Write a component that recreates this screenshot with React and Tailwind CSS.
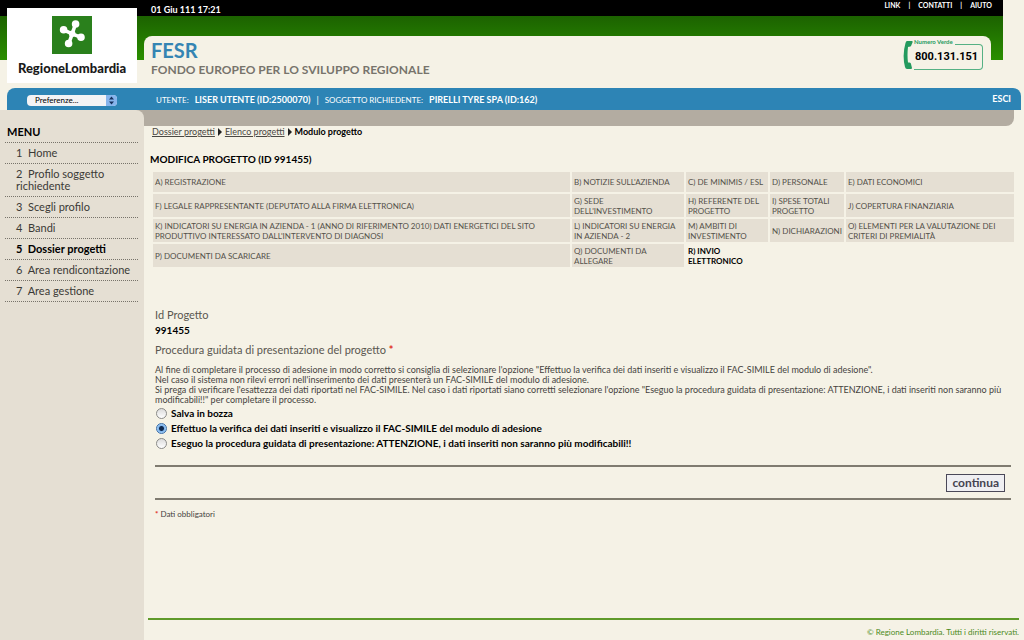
import React, { useState } from 'react';

const MENU_ITEMS = [
  'Home',
  'Profilo soggetto richiedente',
  'Scegli profilo',
  'Bandi',
  'Dossier progetti',
  'Area rendicontazione',
  'Area gestione',
];

const STEPS = [
  ['A) REGISTRAZIONE', "B) NOTIZIE SULL'AZIENDA", 'C) DE MINIMIS / ESL', 'D) PERSONALE', 'E) DATI ECONOMICI'],
  [
    'F) LEGALE RAPPRESENTANTE (DEPUTATO ALLA FIRMA ELETTRONICA)',
    "G) SEDE DELL'INVESTIMENTO",
    'H) REFERENTE DEL PROGETTO',
    'I) SPESE TOTALI PROGETTO',
    'J) COPERTURA FINANZIARIA',
  ],
  [
    "K) INDICATORI SU ENERGIA IN AZIENDA - 1 (ANNO DI RIFERIMENTO 2010) DATI ENERGETICI DEL SITO PRODUTTIVO INTERESSATO DALL'INTERVENTO DI DIAGNOSI",
    'L) INDICATORI SU ENERGIA IN AZIENDA - 2',
    'M) AMBITI DI INVESTIMENTO',
    'N) DICHIARAZIONI',
    'O) ELEMENTI PER LA VALUTAZIONE DEI CRITERI DI PREMIALITÀ',
  ],
  ['P) DOCUMENTI DA SCARICARE', 'Q) DOCUMENTI DA ALLEGARE', 'R) INVIO ELETTRONICO'],
];

const CURRENT_STEP = 'R) INVIO ELETTRONICO';

const OPTIONS = [
  { id: 'bozza', label: 'Salva in bozza' },
  { id: 'verifica', label: 'Effettuo la verifica dei dati inseriti e visualizzo il FAC-SIMILE del modulo di adesione' },
  {
    id: 'presentazione',
    label: 'Eseguo la procedura guidata di presentazione: ATTENZIONE, i dati inseriti non saranno più modificabili!!',
  },
];

function Logo() {
  return (
    <a href="#" className="mt-2 mr-[7px] ml-[7px] flex h-[75px] flex-col items-center bg-white pt-2">
      <svg viewBox="0 0 40 38" className="h-[38px] w-10">
        <rect width="40" height="38" fill="#2a801c" />
        <g stroke="#fff" strokeWidth="3.6" strokeLinecap="round" fill="#fff">
          <path d="M20.200 17.800 L23.500 8 M20.200 17.800 L29 21.300 M20.200 17.800 L16.800 27.500 M20.200 17.800 L11.500 13.800" />
          <circle cx="23.6" cy="8" r="2" />
          <circle cx="29" cy="21.3" r="2" />
          <circle cx="16.6" cy="27.5" r="2" />
          <circle cx="11.6" cy="13.8" r="2" />
          <circle cx="20.2" cy="17.8" r="1.5" />
        </g>
      </svg>
      <span className="mt-1.5 text-[13px] leading-4 font-black text-[#1a1a1a]">RegioneLombardia</span>
    </a>
  );
}

function NumeroVerde() {
  return (
    <div className="mt-1 mr-2 flex h-[30px] items-stretch">
      <svg viewBox="0 0 11 30" className="h-[30px] w-[11px]">
        <path
          d="M4 1 L9 1 Q10 1 9.500 2.500 L8 6 Q7.500 7 6 6.800 L5 7 Q4 15 5 22.500 L6.500 22.500 Q8 22.500 8 24 L9 28 Q9 29 8 29 L4 29 Q2.500 29 2 27 Q-1 15 2.500 3 Q3 1 4 1 Z"
          fill="#249a5e"
        />
      </svg>
      <div className="flex w-[69px] flex-col">
        <div className="relative z-10 flex h-1 items-center">
          <span className="bg-[#f5f2e6] pr-0.5 text-[6px] leading-[6px] font-bold text-[#249a5e]">Numero Verde</span>
        </div>
        <div className="flex flex-1 items-center rounded-r border-y border-r border-[#55b184] pl-px font-['Roboto',sans-serif] text-[11px] leading-4 font-bold text-black">
          800.131.151
        </div>
      </div>
    </div>
  );
}

function Header() {
  return (
    <header className="mr-[21px] flex h-[88px] bg-[linear-gradient(to_bottom,#000_16px,#1c6200_16px,#2a8f00_60px,transparent_60px)]">
      <div className="w-36 shrink-0">
        <Logo />
      </div>
      <div className="flex flex-1 flex-col">
        <div className="flex h-9 shrink-0 items-start justify-between pr-[11px] pl-[7px] font-bold text-white">
          <span className="pt-1 text-[9px] leading-3">01 Giu 111 17:21</span>
          <nav className="flex gap-2 text-[7px] leading-[10px]">
            <a href="#">LINK</a>
            <span>|</span>
            <a href="#">CONTATTI</a>
            <span>|</span>
            <a href="#">AIUTO</a>
          </nav>
        </div>
        <div className="mr-3 flex flex-1 items-start justify-between rounded-t-lg bg-[#f5f2e6] pl-[7px]">
          <div>
            <h1 className="pt-1 text-[20px] leading-5 font-bold text-[#3585b3]">FESR</h1>
            <h2 className="pt-0.5 text-[12px] leading-4 font-bold text-[#77746c]">
              FONDO EUROPEO PER LO SVILUPPO REGIONALE
            </h2>
          </div>
          <NumeroVerde />
        </div>
      </div>
    </header>
  );
}

function UserBar() {
  return (
    <div className="mr-[3px] ml-[7px] flex h-[22px] items-center rounded-t-lg bg-[#2d84b5] text-[9px] leading-3 text-white">
      <div className="flex w-[137px] shrink-0 items-center pt-0.5 pl-5">
        <div className="relative flex h-[11px] w-[90px] overflow-hidden rounded bg-[#f3f3f5]">
          <select
            aria-label="Preferenze"
            className="w-full appearance-none bg-transparent pl-2 text-[8px] leading-[11px] text-black"
          >
            <option>Preferenze...</option>
          </select>
          <svg viewBox="0 0 11 11" className="pointer-events-none absolute top-0 right-0 h-[11px] w-[11px]">
            <rect width="11" height="11" fill="#86b4ec" />
            <path d="M5.500 1.500 L8 4.500 H3 Z M5.500 9.500 L8 6.500 H3 Z" fill="#17305c" />
          </svg>
        </div>
      </div>
      <div className="flex flex-1 items-center gap-1.5 pt-0.5 pl-3">
        <span className="text-[8px]">UTENTE:</span>
        <strong>LISER UTENTE (ID:2500070)</strong>
        <span>|</span>
        <span className="text-[8px]">SOGGETTO RICHIEDENTE:</span>
        <strong>PIRELLI TYRE SPA (ID:162)</strong>
      </div>
      <a href="#" className="pr-2.5 font-bold">ESCI</a>
    </div>
  );
}

function Sidebar() {
  return (
    <aside className="flex w-36 shrink-0 flex-col bg-[#b3aca1]">
      <div className="flex-1 rounded-tr-lg bg-[#e5dfd3] pt-4 pr-1.5 pl-[5px]">
        <h3 className="border-b border-dotted border-[#77736a] pb-1 pl-0.5 text-[11px] leading-3 font-bold text-black">
          MENU
        </h3>
        <ul>
          {MENU_ITEMS.map((item, i) => (
            <li key={item} className="border-b border-dotted border-[#77736a] py-1 pl-[11px]">
              <a
                href="#"
                className={`block text-[11px] leading-3 ${
                  item === 'Dossier progetti' ? 'font-bold text-black' : 'text-[#3b3a36]'
                }`}
              >
                {`${i + 1}\u00a0 ${item}`}
              </a>
            </li>
          ))}
        </ul>
      </div>
    </aside>
  );
}

function Arrow() {
  return (
    <svg viewBox="0 0 4 8" className="h-2 w-1">
      <path d="M0 0 L4 4 L0 8 Z" fill="#222" />
    </svg>
  );
}

function Breadcrumb() {
  return (
    <nav className="flex items-center gap-[3px] pl-2 text-[9px] leading-3 text-[#4a4843]">
      <a href="#" className="underline">Dossier progetti</a>
      <Arrow />
      <a href="#" className="underline">Elenco progetti</a>
      <Arrow />
      <strong className="text-black">Modulo progetto</strong>
    </nav>
  );
}

function StepsTable() {
  return (
    <table className="w-full table-fixed border-separate border-spacing-0.5 text-[8px] leading-[10px] text-[#54514a]">
      <colgroup>
        <col />
        <col className="w-[112px]" />
        <col className="w-[82px]" />
        <col className="w-[74px]" />
        <col className="w-[168px]" />
      </colgroup>
      <tbody>
        {STEPS.map((row) => (
          <tr key={row[0]} className="h-[23px] first:h-5">
            {row.map((step) => (
              <td
                key={step}
                className={
                  step === CURRENT_STEP
                    ? 'py-px pl-0.5 align-middle font-bold text-black'
                    : 'bg-[#e5dfd3] py-px pl-0.5 align-middle'
                }
              >
                <a href="#">{step}</a>
              </td>
            ))}
          </tr>
        ))}
      </tbody>
    </table>
  );
}

function ProjectForm() {
  const [choice, setChoice] = useState('verifica');

  return (
    <form className="mt-[38px] pr-[13px] pl-[11px]" onSubmit={(e) => e.preventDefault()}>
      <p className="text-[11px] leading-4 text-[#5a5750]">Id Progetto</p>
      <p className="text-[10px] leading-[14px] font-bold text-black">991455</p>

      <fieldset className="mt-1">
        <legend className="pt-px text-[11px] leading-4 text-[#5a5750]">
          Procedura guidata di presentazione del progetto <span className="font-bold text-[#e0301e]">*</span>
        </legend>
        <p className="mt-[7px] text-[9px] leading-[10px] text-[#45433e]">
          Al fine di completare il processo di adesione in modo corretto si consiglia di selezionare l'opzione
          "Effettuo la verifica dei dati inseriti e visualizzo il FAC-SIMILE del modulo di adesione".
          <br />
          Nel caso il sistema non rilevi errori nell'inserimento dei dati presenterà un FAC-SIMILE del modulo di
          adesione.
          <br />
          Si prega di verificare l'esattezza dei dati riportati nel FAC-SIMILE. Nel caso i dati riportati siano corretti
          selezionare l'opzione "Eseguo la procedura guidata di presentazione: ATTENZIONE, i dati inseriti non saranno
          più modificabili!!" per completare il processo.
        </p>
        <div className="mt-px">
          {OPTIONS.map((opt) => (
            <div key={opt.id} className="flex h-[15px] items-center pl-px">
              <input
                type="radio"
                id={opt.id}
                name="procedura"
                checked={choice === opt.id}
                onChange={() => setChoice(opt.id)}
                className="h-[11px] w-[11px] appearance-none rounded-full border border-[#8a8a88] bg-gradient-to-b from-[#dcdcdc] to-white checked:border-[#3c6ea8] checked:bg-[radial-gradient(circle,#10294f_2px,#7db4ee_3px,#b5d9fa_5px)]"
              />
              <label htmlFor={opt.id} className="pl-1 text-[10px] leading-[15px] font-bold text-black">
                {opt.label}
              </label>
            </div>
          ))}
        </div>
      </fieldset>

      <div className="mt-3.5 flex h-[35px] items-center justify-end border-y-2 border-[#7f7b70] pr-1.5">
        <button
          type="submit"
          className="h-[18px] border border-[#4a4858] bg-[#efeff2] px-[5px] text-[12px] leading-4 font-bold text-[#45434f]"
        >
          continua
        </button>
      </div>
      <p className="mt-2 text-[8px] leading-3 text-[#45433e]">
        <span className="font-bold text-[#e0301e]">*</span> Dati obbligatori
      </p>
    </form>
  );
}

export default function App() {
  return (
    <div className="flex min-h-screen flex-col bg-[#f5f2e6] font-['Lato',sans-serif]">
      <Header />
      <UserBar />
      <div className="flex flex-1">
        <Sidebar />
        <div className="flex min-w-0 flex-1 flex-col">
          <div className="mr-2.5 h-4 shrink-0 rounded-br-lg bg-[#b3aca1]" />
          <main className="flex-1">
            <Breadcrumb />
            <h3 className="mt-[14px] pb-1 pl-1.5 text-[10px] leading-[14px] font-bold text-black">
              MODIFICA PROGETTO (ID 991455)
            </h3>
            <div className="pr-2 pl-[7px]">
              <StepsTable />
            </div>
            <ProjectForm />
          </main>
          <footer className="mr-[5px] ml-1 border-t-2 border-[#5f9a2a] pt-1.5 pb-0.5 text-right text-[8px] leading-3 text-[#4c8a1c]">
            © Regione Lombardia. Tutti i diritti riservati.
          </footer>
        </div>
      </div>
    </div>
  );
}
